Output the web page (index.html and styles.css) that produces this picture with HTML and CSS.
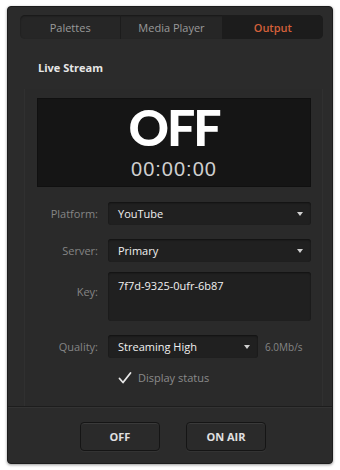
FILE: index.html
```
<!DOCTYPE html>
<html lang="en">
<head>
    <meta charset="UTF-8">
    <title>Output - Live Stream</title>
    <link rel="stylesheet" href="styles.css">
</head>
<body>
    <div class="panel">
        <div class="tabs">
            <div class="tab">Palettes</div>
            <div class="tab">Media Player</div>
            <div class="tab active">Output</div>
        </div>

        <div class="section-title">Live Stream</div>

        <div class="section">
            <div class="display">
                <div class="status">OFF</div>
                <div class="timer">00:00:00</div>
            </div>

            <div class="form">
                <label class="label">Platform:</label>
                <div class="select"><span>YouTube</span><span class="arrow"></span></div>

                <label class="label">Server:</label>
                <div class="select"><span>Primary</span><span class="arrow"></span></div>

                <label class="label key-label">Key:</label>
                <div class="key-box">7f7d-9325-0ufr-6b87</div>

                <label class="label">Quality:</label>
                <div class="quality-row">
                    <div class="select"><span>Streaming High</span><span class="arrow"></span></div>
                    <span class="rate">6.0Mb/s</span>
                </div>

                <div></div>
                <div class="check-row">
                    <svg class="check" width="14" height="14" viewBox="0 0 14 14">
                        <path d="M1.5 7.5 L5 11.5 L12.5 2" fill="none" stroke="#e8e8e8" stroke-width="1.8" stroke-linecap="round" stroke-linejoin="round"/>
                    </svg>
                    <span>Display status</span>
                </div>
            </div>
        </div>

        <div class="footer">
            <button class="btn">OFF</button>
            <button class="btn">ON AIR</button>
        </div>
    </div>
</body>
</html>
```

FILE: styles.css
```
body {
    margin: 0;
    padding: 6px 7px;
    background: #ffffff;
    font-family: "Open Sans", "Liberation Sans", Arial, sans-serif;
}

.panel {
    width: 326px;
    height: 458px;
    box-sizing: border-box;
    background: #2b2b2b;
    border: 1px solid #1c1c1c;
    border-radius: 4px;
    box-shadow: 0 1px 3px rgba(0,0,0,0.4);
    display: flex;
    flex-direction: column;
}

.tabs {
    margin: 8px 9px 0 12px;
    height: 24px;
    display: flex;
    background: #262626;
    border-radius: 5px;
    box-shadow: inset 0 1px 2px rgba(0,0,0,0.4);
    overflow: hidden;
}

.tab {
    flex: 1;
    display: flex;
    align-items: center;
    justify-content: center;
    font-size: 11px;
    color: #9a9a9a;
    border-right: 1px solid #1c1c1c;
}

.tab:last-child {
    border-right: none;
}

.tab.active {
    background: #1c1c1c;
    color: #d4603a;
    font-weight: 600;
}

.section-title {
    margin: 21px 0 0 30px;
    font-size: 11px;
    font-weight: 700;
    color: #e6e6e6;
}

.section {
    margin: 14px 9px 0 16px;
    padding: 9px 11px 0 12px;
    border-left: 1px solid #303030;
    border-right: 1px solid #303030;
    height: 317px;
    box-sizing: border-box;
    background: #2a2a2a;
}

.display {
    height: 89px;
    box-sizing: border-box;
    padding-top: 3px;
    background: #151515;
    border: 1px solid #101010;
    text-align: center;
}

.status {
    font-family: Lato, "Open Sans", sans-serif;
    font-size: 50px;
    font-weight: 900;
    color: #ffffff;
    line-height: 50px;
    letter-spacing: -2px;
}

.timer {
    font-family: "Liberation Sans", Arial, sans-serif;
    font-size: 20px;
    color: #cfcfcf;
    line-height: 20px;
    margin-top: 7px;
    letter-spacing: 1px;
}

.form {
    margin-top: 15px;
    display: grid;
    grid-template-columns: 61px 1fr;
    column-gap: 10px;
    row-gap: 14px;
    align-items: center;
}

.label {
    text-align: right;
    font-size: 11px;
    color: #858585;
}

.key-label {
    align-self: start;
    margin-top: 8px;
}

.select {
    height: 23px;
    box-sizing: border-box;
    background: #202020;
    border-radius: 3px;
    box-shadow: inset 0 1px 2px rgba(0,0,0,0.5);
    display: flex;
    align-items: center;
    justify-content: space-between;
    padding: 0 8px 0 10px;
    font-size: 11px;
    color: #f0f0f0;
}

.arrow {
    width: 0;
    height: 0;
    border-left: 3px solid transparent;
    border-right: 3px solid transparent;
    border-top: 4px solid #d0d0d0;
}

.key-box {
    height: 49px;
    box-sizing: border-box;
    background: #202020;
    border-radius: 3px;
    box-shadow: inset 0 1px 2px rgba(0,0,0,0.5);
    padding: 6px 10px;
    font-size: 11px;
    color: #f0f0f0;
    margin-top: -4px;
}

.quality-row {
    display: flex;
    align-items: center;
    gap: 7px;
}

.quality-row .select {
    width: 150px;
}

.rate {
    font-size: 10px;
    color: #858585;
}

.check-row {
    display: flex;
    align-items: center;
    gap: 6px;
    padding-left: 10px;
    font-size: 11px;
    color: #8a8a8a;
    margin-top: -2px;
}

.footer {
    flex: 1;
    border-top: 1px solid #1d1d1d;
    box-shadow: inset 0 1px 0 #333;
    display: flex;
    justify-content: center;
    align-items: center;
    gap: 26px;
    padding-left: 6px;
    padding-top: 2px;
}

.btn {
    width: 80px;
    height: 29px;
    background: #2a2a2a;
    border: 1px solid #151515;
    border-radius: 4px;
    box-shadow: inset 0 1px 0 #3a3a3a, 0 1px 0 #333;
    color: #e0e0e0;
    font-family: "Open Sans", "Liberation Sans", Arial, sans-serif;
    font-size: 11px;
    font-weight: 700;
}
```
